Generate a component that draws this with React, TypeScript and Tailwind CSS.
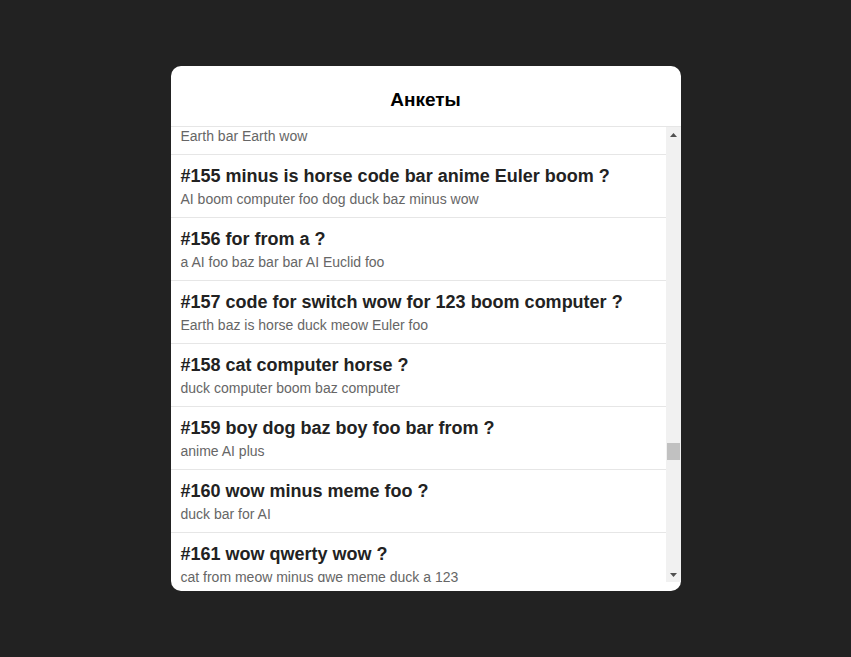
import React, { useEffect, useRef } from "react";

const known: Record<number, [string, string]> = {
  154: ["boom foo wow Earth ?", "Earth bar Earth wow"],
  155: ["minus is horse code bar anime Euler boom ?", "AI boom computer foo dog duck baz minus wow"],
  156: ["for from a ?", "a AI foo baz bar bar AI Euclid foo"],
  157: ["code for switch wow for 123 boom computer ?", "Earth baz is horse duck meow Euler foo"],
  158: ["cat computer horse ?", "duck computer boom baz computer"],
  159: ["boy dog baz boy foo bar from ?", "anime AI plus"],
  160: ["wow minus meme foo ?", "duck bar for AI"],
  161: ["wow qwerty wow ?", "cat from meow minus qwe meme duck a 123"],
  162: ["foo bar baz ?", "meme duck a 123"],
};

const items = Object.keys(known)
  .map(Number)
  .map((n) => ({ n, title: known[n][0], sub: known[n][1] }));

export default function App() {
  const ref = useRef<HTMLDivElement>(null);
  useEffect(() => {
    if (ref.current) ref.current.scrollTop = 63 - 28;
  }, []);
  return (
    <div
      className="min-h-screen bg-[#222222] flex items-center justify-center"
      style={{ fontFamily: '"Liberation Sans", Arial, sans-serif' }}
    >
      <div className="w-[510px] h-[525px] bg-white rounded-[10px] overflow-hidden flex flex-col pb-[9px]">
        <div className="pt-[22px] pb-[14px] border-b border-[#e6e6e6] text-center">
          <h1 className="text-[19px] leading-[24px] font-bold text-black">Анкеты</h1>
        </div>
        <div className="flex-1 flex min-h-0">
          <div
            ref={ref}
            className="flex-1 overflow-hidden"
          >
            {items.map((it) => (
              <div key={it.n} className="px-[10px] py-[10px] border-b border-[#e6e6e6]">
                <div className="text-[18px] leading-[22px] font-bold text-[#222222] whitespace-nowrap">
                  #{it.n} {it.title}
                </div>
                <div className="mt-1 text-[14px] leading-[16px] text-[#666666] whitespace-nowrap">{it.sub}</div>
              </div>
            ))}
          </div>
          <div className="w-[15px] bg-[#f1f1f1] flex flex-col">
            <div className="h-[15px] flex items-center justify-center">
              <svg width="7" height="4" viewBox="0 0 7 4">
                <path d="M0 4 L3.5 0 L7 4 Z" fill="#505050" />
              </svg>
            </div>
            <div className="flex-1 relative">
              <div className="absolute left-[1px] right-[1px] top-[301px] h-[17px] bg-[#c1c1c1]" />
            </div>
            <div className="h-[15px] flex items-center justify-center">
              <svg width="7" height="4" viewBox="0 0 7 4">
                <path d="M0 0 L7 0 L3.5 4 Z" fill="#505050" />
              </svg>
            </div>
          </div>
        </div>
      </div>
    </div>
  );
}
